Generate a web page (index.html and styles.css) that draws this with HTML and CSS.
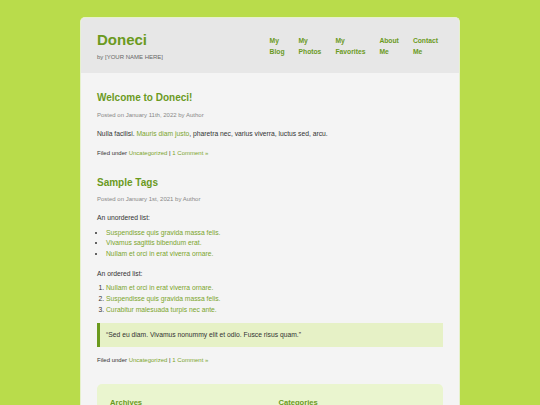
FILE: index.html
```html
<!DOCTYPE html>
<html lang="en">
<head>
    <meta charset="UTF-8">
    <meta name="viewport" content="width=device-width, initial-scale=1.0">
    <title>Doneci</title>
    <link rel="stylesheet" href="styles.css">
</head>
<body>
    <div class="wrapper">
        <div class="header">
            <div class="brand">
                <h1>Doneci</h1>
                <p class="byline">by [YOUR NAME HERE]</p>
            </div>
            <ul class="nav">
                <li><a href="#">My Blog</a></li>
                <li><a href="#">My Photos</a></li>
                <li><a href="#">My Favorites</a></li>
                <li><a href="#">About Me</a></li>
                <li><a href="#">Contact Me</a></li>
            </ul>
        </div>

        <div class="content">
            <div class="post">
                <h2>Welcome to Doneci!</h2>
                <p class="meta">Posted on January 11th, 2022 by Author</p>
                <p>Nulla facilisi. <a href="#">Mauris diam justo</a>, pharetra nec, varius viverra, luctus sed, arcu.</p>
                <p class="filed">Filed under <a href="#">Uncategorized</a> | <a href="#">1 Comment &raquo;</a></p>
            </div>

            <div class="post">
                <h2>Sample Tags</h2>
                <p class="meta">Posted on January 1st, 2021 by Author</p>
                <p class="intro">An unordered list:</p>
                <ul class="list">
                    <li><a href="#">Suspendisse quis gravida massa felis.</a></li>
                    <li><a href="#">Vivamus sagittis bibendum erat.</a></li>
                    <li><a href="#">Nullam et orci in erat viverra ornare.</a></li>
                </ul>
                <p class="intro">An ordered list:</p>
                <ol class="list">
                    <li><a href="#">Nullam et orci in erat viverra ornare.</a></li>
                    <li><a href="#">Suspendisse quis gravida massa felis.</a></li>
                    <li><a href="#">Curabitur malesuada turpis nec ante.</a></li>
                </ol>
                <blockquote>&ldquo;Sed eu diam. Vivamus nonummy elit et odio. Fusce risus quam.&rdquo;</blockquote>
                <p class="filed">Filed under <a href="#">Uncategorized</a> | <a href="#">1 Comment &raquo;</a></p>
            </div>

            <div class="sidebar">
                <div class="widget">
                    <h3>Archives</h3>
                    <ul>
                        <li><a href="#">January 2022</a></li>
                        <li><a href="#">January 2021</a></li>
                    </ul>
                </div>
                <div class="widget">
                    <h3>Categories</h3>
                    <ul>
                        <li><a href="#">Uncategorized</a></li>
                    </ul>
                </div>
            </div>
        </div>
    </div>
</body>
</html>
```

FILE: styles.css
```css
body {
    margin: 0;
    background-color: #b9dc4b;
    font-family: "Liberation Sans", Arial, sans-serif;
    color: #333;
}
a {
    color: #7ba52c;
    text-decoration: none;
}
.wrapper {
    width: 378px;
    margin: 17px auto 0;
    border: 1px solid #e6f1cc;
    border-bottom: none;
    border-radius: 5px 5px 0 0;
    background: #f4f4f4;
    overflow: hidden;
}
.header {
    display: flex;
    justify-content: space-between;
    align-items: center;
    background: #e7e7e7;
    padding: 13px 21px 12px 16px;
}
.header h1 {
    margin: 0;
    font-size: 15px;
    line-height: 17px;
    color: #6b9a1e;
}
.byline {
    margin: 6px 0 0;
    font-size: 6px;
    line-height: 7px;
    color: #666;
}
.nav {
    display: flex;
    gap: 14px;
    list-style: none;
    margin: 0;
    padding: 0;
}
.nav li {
    width: min-content;
}
.nav a {
    display: block;
    font-size: 6.75px;
    line-height: 11px;
    font-weight: bold;
    color: #6b9a1e;
}
.content {
    padding: 19px 16px 0;
}
.post {
    margin-bottom: 20px;
}
.post h2 {
    margin: 0 0 6.5px;
    font-size: 10px;
    line-height: 12px;
    color: #6b9a1e;
}
.post p {
    margin: 0 0 10px;
    font-size: 6.75px;
    line-height: 10px;
}
.post .meta {
    font-size: 6px;
    line-height: 8px;
    color: #888;
}
.post .intro {
    margin-bottom: 4.5px;
}
.post .filed {
    margin: 0;
    font-size: 6px;
    line-height: 8px;
}
.list {
    margin: 0 0 9px;
    padding-left: 9px;
    font-size: 6.75px;
    line-height: 10.7px;
}
ol.list {
    margin-bottom: 8px;
}
blockquote {
    margin: 0 0 9px;
    padding: 6.85px 6px;
    background: #e6f1c6;
    border-left: 3px solid #6b9a1e;
    font-size: 6.75px;
    line-height: 10px;
}
.sidebar {
    display: grid;
    grid-template-columns: 1fr 1fr;
    gap: 17px;
    margin-top: 17.7px;
    padding: 14.5px 13px;
    background: #eaf5cf;
    border-radius: 5px;
}
.widget h3 {
    margin: 0 0 6px;
    font-size: 7.6px;
    line-height: 9px;
    color: #6b9a1e;
}
.widget ul {
    margin: 0;
    padding-left: 9px;
    font-size: 6.75px;
    line-height: 10.7px;
}
```
